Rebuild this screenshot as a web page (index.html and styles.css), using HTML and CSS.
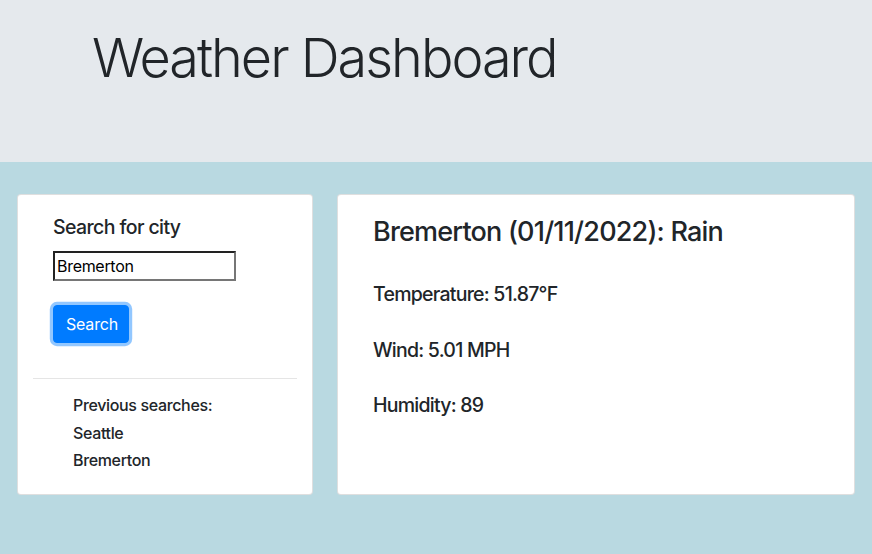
FILE: index.html
```html
<!DOCTYPE html>
<html lang="en">
<head>
<meta charset="utf-8">
<title>Weather Dashboard</title>
<link rel="stylesheet" href="styles.css">
</head>
<body>
<header class="jumbotron">
  <h1 class="display">Weather Dashboard</h1>
</header>
<main class="layout">
  <aside class="card side">
    <form class="search-form">
      <label class="search-label" for="city">Search for city</label>
      <input class="city-input" id="city" type="text" value="Bremerton">
      <button class="btn-search" type="button">Search</button>
    </form>
    <hr class="divider">
    <ul class="history">
      <li class="history-title">Previous searches:</li>
      <li>Seattle</li>
      <li>Bremerton</li>
    </ul>
  </aside>
  <section class="card current">
    <h2 class="city-title">Bremerton (01/11/2022): Rain</h2>
    <p class="stat">Temperature: 51.87°F</p>
    <p class="stat">Wind: 5.01 MPH</p>
    <p class="stat">Humidity: 89</p>
  </section>
</main>
</body>
</html>
```
FILE: styles.css
```css
* { box-sizing: border-box; }
html, body { margin: 0; padding: 0; }
body {
  font-family: Inter, "Noto Sans", sans-serif;
  color: #212529;
  background: #b9d9e1;
  height: 554px;
  overflow: hidden;
}
.jumbotron {
  background: #e5e9ed;
  height: 162px;
  padding: 25px 0 0 92px;
}
.display {
  margin: 0;
  font-size: 54px;
  font-weight: 300;
  line-height: 65px;
  letter-spacing: -2px;
}
.layout {
  display: flex;
  gap: 24px;
  padding: 32px 17px 0 17px;
}
.card {
  background: #fff;
  border: 1px solid rgba(0,0,0,0.125);
  border-radius: 4px;
  height: 301px;
}
.side {
  width: 296px;
  flex: none;
  padding: 20px 15px 0 15px;
}
.search-form {
  display: flex;
  flex-direction: column;
  align-items: flex-start;
  padding-left: 20px;
}
.search-label {
  font-size: 19.5px;
  font-weight: 500;
  line-height: 24px;
  letter-spacing: -0.6px;
  margin-bottom: 12px;
}
.city-input {
  width: 183px;
  height: 30px;
  font-family: inherit;
  font-size: 16px;
  letter-spacing: -0.3px;
  padding: 1px 2px;
  border: 2px solid #767676;
  border-top-color: #222;
  border-left-color: #222;
  color: #000;
  margin: 0 0 24px 0;
}
.btn-search {
  font-family: inherit;
  font-size: 16px;
  line-height: 24px;
  padding: 6px 12px;
  width: 76px;
  height: 38px;
  color: #fff;
  background: #007bff;
  border: 1px solid #007bff;
  border-radius: 4px;
  box-shadow: 0 0 0 3.2px rgba(38,143,255,0.5);
  letter-spacing: -0.2px;
}
.divider {
  margin: 35px 0 0 0;
  border: 0;
  border-top: 1px solid rgba(0,0,0,0.1);
}
.history {
  list-style: none;
  margin: 13px 0 0 0;
  padding: 0 0 0 40px;
  font-size: 16px;
  font-weight: 500;
  line-height: 27.5px;
  letter-spacing: -0.35px;
}
.current {
  flex: 1;
  padding: 20px 35px 0 35px;
}
.city-title {
  margin: 0 0 33px 0;
  font-size: 27px;
  font-weight: 500;
  line-height: 34px;
  letter-spacing: -0.8px;
}
.stat {
  margin: 0 0 31.5px 0;
  font-size: 19.5px;
  font-weight: 500;
  line-height: 24px;
  letter-spacing: -0.75px;
}
```
